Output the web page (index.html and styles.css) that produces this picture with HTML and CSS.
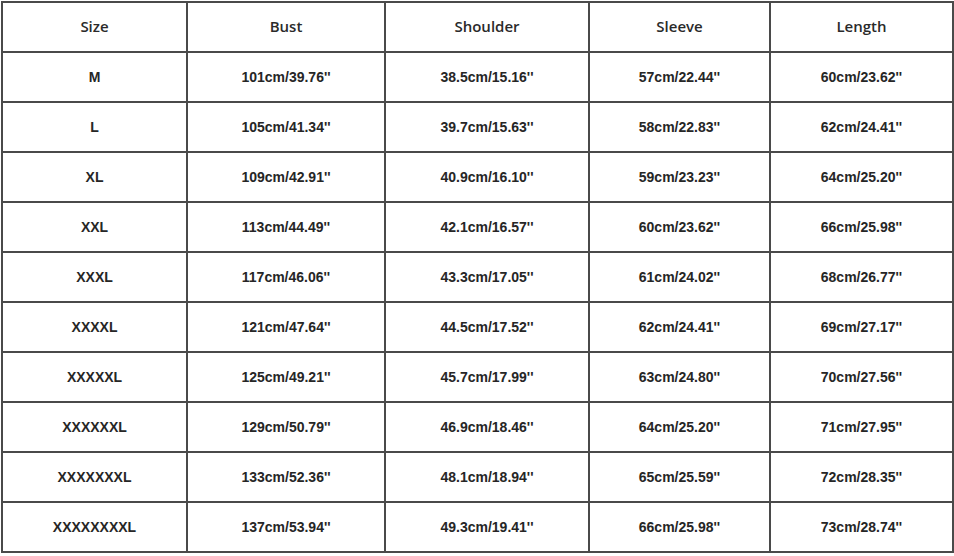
FILE: index.html
```html
<!DOCTYPE html>
<html>
<head>
<meta charset="utf-8">
<link rel="stylesheet" href="styles.css">
</head>
<body>
<div class="wrap">
<table class="size-table">
  <colgroup>
    <col class="c1"><col class="c2"><col class="c3"><col class="c4"><col class="c5">
  </colgroup>
  <thead>
    <tr><th>Size</th><th>Bust</th><th>Shoulder</th><th>Sleeve</th><th>Length</th></tr>
  </thead>
  <tbody>
    <tr><td>M</td><td>101cm/39.76''</td><td>38.5cm/15.16''</td><td>57cm/22.44''</td><td>60cm/23.62''</td></tr>
    <tr><td>L</td><td>105cm/41.34''</td><td>39.7cm/15.63''</td><td>58cm/22.83''</td><td>62cm/24.41''</td></tr>
    <tr><td>XL</td><td>109cm/42.91''</td><td>40.9cm/16.10''</td><td>59cm/23.23''</td><td>64cm/25.20''</td></tr>
    <tr><td>XXL</td><td>113cm/44.49''</td><td>42.1cm/16.57''</td><td>60cm/23.62''</td><td>66cm/25.98''</td></tr>
    <tr><td>XXXL</td><td>117cm/46.06''</td><td>43.3cm/17.05''</td><td>61cm/24.02''</td><td>68cm/26.77''</td></tr>
    <tr><td>XXXXL</td><td>121cm/47.64''</td><td>44.5cm/17.52''</td><td>62cm/24.41''</td><td>69cm/27.17''</td></tr>
    <tr><td>XXXXXL</td><td>125cm/49.21''</td><td>45.7cm/17.99''</td><td>63cm/24.80''</td><td>70cm/27.56''</td></tr>
    <tr><td>XXXXXXL</td><td>129cm/50.79''</td><td>46.9cm/18.46''</td><td>64cm/25.20''</td><td>71cm/27.95''</td></tr>
    <tr><td>XXXXXXXL</td><td>133cm/52.36''</td><td>48.1cm/18.94''</td><td>65cm/25.59''</td><td>72cm/28.35''</td></tr>
    <tr><td>XXXXXXXXL</td><td>137cm/53.94''</td><td>49.3cm/19.41''</td><td>66cm/25.98''</td><td>73cm/28.74''</td></tr>
  </tbody>
</table>
</div>
</body>
</html>
```

FILE: styles.css
```css
html, body {
  margin: 0;
  padding: 0;
  background: #ffffff;
}
.wrap {
  padding: 1px 0 0 1px;
}
.size-table {
  border-collapse: collapse;
  table-layout: fixed;
  width: 951px;
  color: #222;
}
.c1 { width: 185px; }
.c2 { width: 198px; }
.c3 { width: 204px; }
.c4 { width: 181px; }
.c5 { width: 183px; }
.size-table th,
.size-table td {
  border: 2px solid #4a4a4a;
  height: 48px;
  padding: 0;
  text-align: center;
  vertical-align: middle;
}
.size-table th {
  font-family: "Open Sans", "Noto Sans", sans-serif;
  font-weight: 600;
  font-size: 15px;
  color: #2a2a2a;
  line-height: 18px;
  height: 46px;
  padding-bottom: 2px;
}
.size-table td {
  font-family: "Liberation Sans", Arial, sans-serif;
  font-weight: bold;
  font-size: 14px;
  color: #262626;
}
```
